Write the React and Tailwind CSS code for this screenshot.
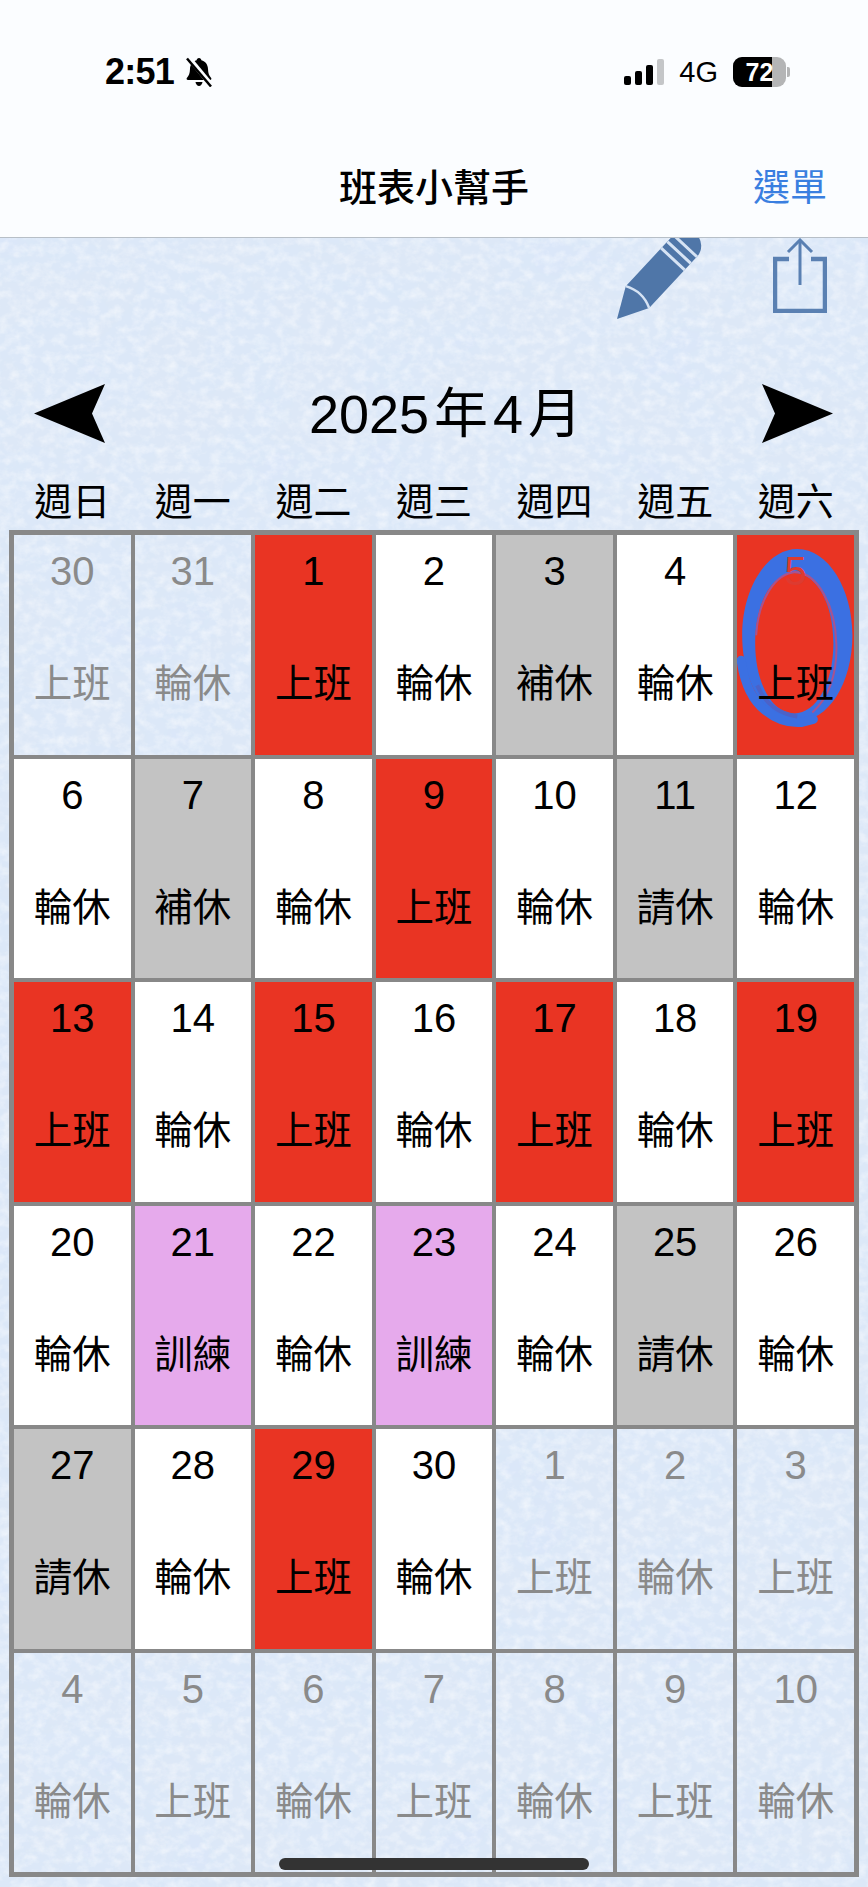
const FONT = "font-['Liberation_Sans','Noto_Sans_CJK_TC',sans-serif]";

const weekDays = ['週日', '週一', '週二', '週三', '週四', '週五', '週六'];

const weeks = [
    [['30', '上班', 'm'], ['31', '輪休', 'm'], ['1', '上班', 'r'], ['2', '輪休', 'w'], ['3', '補休', 'g'], ['4', '輪休', 'w'], ['5', '上班', 'x']],
    [['6', '輪休', 'w'], ['7', '補休', 'g'], ['8', '輪休', 'w'], ['9', '上班', 'r'], ['10', '輪休', 'w'], ['11', '請休', 'g'], ['12', '輪休', 'w']],
    [['13', '上班', 'r'], ['14', '輪休', 'w'], ['15', '上班', 'r'], ['16', '輪休', 'w'], ['17', '上班', 'r'], ['18', '輪休', 'w'], ['19', '上班', 'r']],
    [['20', '輪休', 'w'], ['21', '訓練', 'p'], ['22', '輪休', 'w'], ['23', '訓練', 'p'], ['24', '輪休', 'w'], ['25', '請休', 'g'], ['26', '輪休', 'w']],
    [['27', '請休', 'g'], ['28', '輪休', 'w'], ['29', '上班', 'r'], ['30', '輪休', 'w'], ['1', '上班', 'm'], ['2', '輪休', 'm'], ['3', '上班', 'm']],
    [['4', '輪休', 'm'], ['5', '上班', 'm'], ['6', '輪休', 'm'], ['7', '上班', 'm'], ['8', '輪休', 'm'], ['9', '上班', 'm'], ['10', '輪休', 'm']],
];

const cellStyles = {
    m: 'text-[#8a8a8a]',
    r: 'bg-[#e93423] text-black',
    w: 'bg-white text-black',
    g: 'bg-[#c3c3c3] text-black',
    p: 'bg-[#e6aaec] text-black',
    x: 'bg-[#e93423] text-black',
};

function PaperTexture() {
    return (
        <svg className="absolute inset-0 w-full h-full" aria-hidden="true">
            <filter id="mottle" x="0" y="0" width="100%" height="100%">
                <feTurbulence type="fractalNoise" baseFrequency="0.014 0.018" numOctaves="5" seed="8" />
                <feColorMatrix values="0 0 0 0 0.70  0 0 0 0 0.80  0 0 0 0 0.95  1.6 0 0 0 -0.55" />
            </filter>
            <filter id="fibre" x="0" y="0" width="100%" height="100%">
                <feTurbulence type="fractalNoise" baseFrequency="0.09 0.11" numOctaves="4" seed="21" />
                <feColorMatrix values="0 0 0 0 1  0 0 0 0 1  0 0 0 0 1  0 1 0 0 -0.4" />
            </filter>
            <rect width="100%" height="100%" fill="#dde8f7" />
            <rect width="100%" height="100%" filter="url(#mottle)" />
            <rect width="100%" height="100%" filter="url(#fibre)" />
        </svg>
    );
}

function MutedBell() {
    return (
        <svg width="28" height="30" viewBox="0 0 28 30" aria-hidden="true">
            <path d="M14 1c1.400 0 2.300 1 2.400 2.300 4 1 6.400 4.300 6.600 8.700.2 4.500 1 6.500 3 8.700.9 1 .3 2.300-1 2.300H3c-1.300 0-1.900-1.300-1-2.300 2-2.200 2.800-4.200 3-8.700.2-4.400 2.600-7.700 6.600-8.700C11.700 2 12.600 1 14 1z" fill="#000" />
            <path d="M10.500 25h7c-.3 2.300-1.700 4-3.500 4s-3.200-1.700-3.500-4z" fill="#000" />
            <path d="M3 0l24 29" stroke="#fbfdff" strokeWidth="5" />
            <path d="M2 1.500l24 28" stroke="#000" strokeWidth="2.500" />
        </svg>
    );
}

function StatusBar() {
    return (
        <div className="flex items-center justify-between h-[60px] pl-[105px] pr-[78px]">
            <div className="flex items-center gap-[11px]">
                <span className="text-[36px] leading-none font-bold text-black tracking-[-0.8px]">2:51</span>
                <MutedBell />
            </div>
            <div className="flex items-center">
                <div className="flex items-end gap-[4px] h-[26px]">
                    <div className="w-[7px] h-[9px] rounded-[2px] bg-black" />
                    <div className="w-[7px] h-[14px] rounded-[2px] bg-black" />
                    <div className="w-[7px] h-[20px] rounded-[2px] bg-black" />
                    <div className="w-[7px] h-[26px] rounded-[2px] bg-[#c4c6c8]" />
                </div>
                <span className="ml-[15px] text-[29px] leading-none text-black">4G</span>
                <div className="ml-[15px] flex items-center">
                    <div className="relative w-[53px] h-[30px] rounded-[9px] overflow-hidden bg-[#b4b5b6]">
                        <div className="w-[39px] h-full bg-black" />
                        <span className="absolute inset-0 flex items-center justify-center text-[25px] leading-none font-bold text-white">72</span>
                    </div>
                    <div className="ml-[1px] w-[3px] h-[10px] rounded-r-[2px] bg-[#b4b5b6]" />
                </div>
            </div>
        </div>
    );
}

function PencilIcon() {
    return (
        <svg width="90" height="81" viewBox="0 0 90 81" aria-hidden="true">
            <g transform="translate(0 81) rotate(-47)">
                <path d="M0 0L30-16H100a16 16 0 0 1 0 32H30z" fill="#4f76a8" />
                <path d="M30-16q8 16 0 32" fill="none" stroke="#d6e3f4" strokeWidth="2.500" />
                <path d="M82-16v32M91-16v32M100-16v32" stroke="#d6e3f4" strokeWidth="3" />
            </g>
        </svg>
    );
}

function ShareIcon() {
    return (
        <svg width="54" height="75" viewBox="0 0 54 75" fill="none" stroke="#5a80b2" aria-hidden="true">
            <path d="M16 21H2v52h50V21H38" strokeWidth="4.500" />
            <path d="M27 47V2" strokeWidth="3" />
            <path d="M15 14L27 2l12 12" strokeWidth="3" />
        </svg>
    );
}

function NavArrow({ flip }) {
    return (
        <svg width="71" height="59" viewBox="0 0 71 59" className={flip ? '-scale-x-100' : ''} aria-hidden="true">
            <path d="M0 29.500L71 0 58 29.500 71 59z" fill="#000" />
        </svg>
    );
}

function HandCircle() {
    return (
        <svg className="absolute inset-0 w-full h-full" viewBox="0 0 116 219" fill="none" aria-hidden="true">
            {/* thick marker ring, heavier along the top and bottom */}
            <path
                fillRule="evenodd"
                fill="#3b70e2"
                d="M60 14C91 14 115 54 115 100c0 48-24 86-55 86S5 148 5 100C5 54 29 14 60 14zM57 38C35 38 18 68 18 108s17 70 39 70 39-30 39-70-17-70-39-70z"
            />
            <path d="M4 125c3 22 11 40 24 50 10 8 22 13 36 12l12-3" stroke="#3b70e2" strokeWidth="9" strokeLinecap="round" />
            <path d="M20 150c9 20 22 28 40 31" stroke="#4c62c8" strokeWidth="4" />
            <path d="M59 37C37 38 21 66 19 100M59 37c21 2 39 32 40 72 1 30-8 54-24 68" stroke="#a8538f" strokeWidth="2" />
        </svg>
    );
}

function DayCell({ day, label, kind }) {
    return (
        <div className={`relative flex flex-col items-center h-[223.5px] border-2 border-[#888888] ${cellStyles[kind]}`}>
            {kind === 'x' && <HandCircle />}
            <div className={`relative mt-[15px] h-[42px] text-[40px] leading-[42px] ${kind === 'x' ? 'text-[#dd3b30]' : ''}`}>{day}</div>
            <div className="relative mt-[70px] h-[44px] text-[38.5px] leading-[44px]">{label}</div>
        </div>
    );
}

export default function App() {
    return (
        <div className={`relative w-[868px] h-[1887px] overflow-hidden ${FONT}`}>
            <PaperTexture />

            {/* Top bar */}
            <header className="relative h-[238px] pt-[42px] bg-[#fbfdff] border-b border-[#b7bfc7]">
                <StatusBar />
                <div className="relative mt-[66px] h-[40px] flex items-center justify-center">
                    <h1 className="text-[38px] leading-none font-medium text-black">班表小幫手</h1>
                    <button className="absolute right-[41px] text-[37px] leading-none text-[#3a7fe0]">選單</button>
                </div>
            </header>

            {/* Tools */}
            <div className="relative flex items-start justify-end gap-[66px] h-[80px] pr-[41px]">
                <PencilIcon />
                <ShareIcon />
            </div>

            {/* Month nav */}
            <div className="relative mt-[66px] flex items-center justify-between pl-[34px] pr-[35px]">
                <NavArrow />
                <div className="ml-[24px] flex items-center gap-[5px] text-[54px] leading-none text-black">
                    <span>2025</span>
                    <span>年</span>
                    <span>4</span>
                    <span>月</span>
                </div>
                <NavArrow flip />
            </div>

            {/* Week header */}
            <div className="relative mt-[37px] ml-[12px] w-[844px] grid grid-cols-7">
                {weekDays.map((d) => (
                    <div key={d} className="text-center text-[38px] leading-[44px] text-black">{d}</div>
                ))}
            </div>

            {/* Calendar */}
            <div className="relative mt-[6px] ml-[9px] w-[850px] border-[3px] border-[#888888] grid grid-cols-7">
                {weeks.map((week, i) =>
                    week.map(([day, label, kind], j) => (
                        <DayCell key={`${i}-${j}`} day={day} label={label} kind={kind} />
                    ))
                )}
            </div>

            {/* Home indicator */}
            <div className="absolute left-[279px] top-[1858px] w-[310px] h-[12px] rounded-full bg-[#333333]" />
        </div>
    );
}
